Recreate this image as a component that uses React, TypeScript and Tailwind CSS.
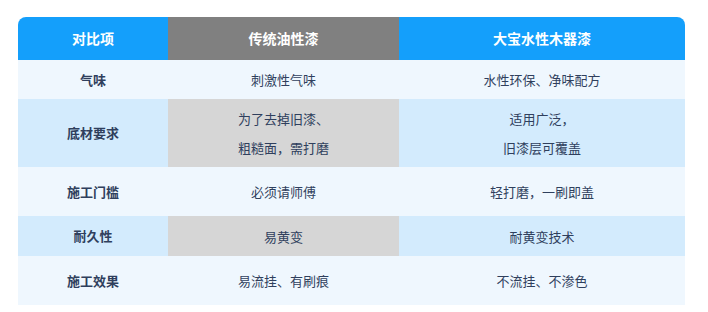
import React from "react";

interface Row {
  label: string;
  oil: string[];
  water: string[];
  height: string;
  tone: "light" | "blue";
}

const rows: Row[] = [
  { label: "气味", oil: ["刺激性气味"], water: ["水性环保、净味配方"], height: "h-[39px]", tone: "light" },
  {
    label: "底材要求",
    oil: ["为了去掉旧漆、", "粗糙面，需打磨"],
    water: ["适用广泛，", "旧漆层可覆盖"],
    height: "h-[68px]",
    tone: "blue",
  },
  { label: "施工门槛", oil: ["必须请师傅"], water: ["轻打磨，一刷即盖"], height: "h-[49px]", tone: "light" },
  { label: "耐久性", oil: ["易黄变"], water: ["耐黄变技术"], height: "h-[40px]", tone: "blue" },
  { label: "施工效果", oil: ["易流挂、有刷痕"], water: ["不流挂、不渗色"], height: "h-[49px]", tone: "light" },
];

const Lines: React.FC<{ lines: string[] }> = ({ lines }) => (
  <div className="flex flex-col items-center leading-[29px]">
    {lines.map((l) => (
      <span key={l}>{l}</span>
    ))}
  </div>
);

export default function App() {
  return (
    <div
      className="w-[708px] h-[312px] bg-white pt-[17px] pl-[18px]"
      style={{ fontFamily: '"Noto Sans CJK SC", "Noto Sans", sans-serif' }}
    >
      <div className="w-[667px] rounded-t-[8px] overflow-hidden text-[13px] text-[#2f3f5d]">
        {/* Header */}
        <div className="flex h-[43px] text-white font-bold text-[14px]">
          <div className="w-[150px] bg-[#149ffb] flex items-center justify-center">对比项</div>
          <div className="w-[231px] bg-[#808080] flex items-center justify-center">传统油性漆</div>
          <div className="flex-1 bg-[#149ffb] flex items-center justify-center">大宝水性木器漆</div>
        </div>

        {/* Body */}
        {rows.map((r) => {
          const bg = r.tone === "light" ? "bg-[#eff7fe]" : "bg-[#d3ebfd]";
          const oilBg = r.tone === "light" ? "bg-[#eff7fe]" : "bg-[#d6d6d6]";
          return (
            <div key={r.label} className={`flex ${r.height}`}>
              <div className={`w-[150px] ${bg} flex items-center justify-center font-bold`}>{r.label}</div>
              <div className={`w-[231px] ${oilBg} flex items-center justify-center`}>
                <Lines lines={r.oil} />
              </div>
              <div className={`flex-1 ${bg} flex items-center justify-center`}>
                <Lines lines={r.water} />
              </div>
            </div>
          );
        })}
      </div>
    </div>
  );
}
